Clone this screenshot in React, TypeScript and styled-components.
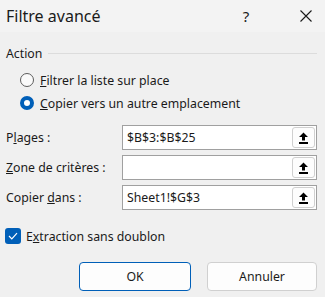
import styled, { createGlobalStyle } from "styled-components";

const GlobalStyle = createGlobalStyle`
  body {
    margin: 0;
    background: #f0f0f0;
    font-family: "Noto Sans", "Open Sans", sans-serif;
    color: #1a1a1a;
  }
`;

const fields = [
    { label: "Plages :", key: "l", index: 1, value: "$B$3:$B$25" },
    { label: "Zone de critères :", key: "Z", index: 0, value: "" },
    { label: "Copier dans :", key: "d", index: 7, value: "Sheet1!$G$3" },
];

function Mnemonic({ text, index }: { text: string; index: number }) {
    return (
        <>
            {text.slice(0, index)}
            <u>{text[index]}</u>
            {text.slice(index + 1)}
        </>
    );
}

function UploadIcon() {
    return (
        <svg width="11" height="12" viewBox="0 0 11 12">
            <path d="M5.5 0.5 L10 5 L7 5 L7 8.5 L4 8.5 L4 5 L1 5 Z" fill="#000" />
            <rect x="1" y="10" width="9" height="2" fill="#000" />
        </svg>
    );
}

export default function App() {
    return (
        <Dialog>
            <GlobalStyle />
            <TitleBar>
                <Title>Filtre avancé</Title>
                <HelpButton>?</HelpButton>
                <CloseButton>
                    <svg width="12" height="12" viewBox="0 0 12 12">
                        <path d="M0.5 0.5 L11.5 11.5 M11.5 0.5 L0.5 11.5" stroke="#1a1a1a" strokeWidth="1.1" />
                    </svg>
                </CloseButton>
            </TitleBar>
            <Body>
                <GroupHeader>
                    <span>Action</span>
                    <Rule />
                </GroupHeader>
                <RadioList>
                    <RadioRow>
                        <Radio />
                        <span><Mnemonic text="Filtrer la liste sur place" index={0} /></span>
                    </RadioRow>
                    <RadioRow>
                        <Radio checked />
                        <span><Mnemonic text="Copier vers un autre emplacement" index={0} /></span>
                    </RadioRow>
                </RadioList>
                <Fields>
                    {fields.map((f) => (
                        <FieldRow key={f.label}>
                            <FieldLabel><Mnemonic text={f.label} index={f.index} /></FieldLabel>
                            <InputBox>
                                <InputText>{f.value}</InputText>
                                <PickButton><UploadIcon /></PickButton>
                            </InputBox>
                        </FieldRow>
                    ))}
                </Fields>
                <CheckRow>
                    <CheckBox>
                        <svg width="10" height="8" viewBox="0 0 10 8">
                            <path d="M1 4 L3.8 6.8 L9 1.2" fill="none" stroke="#fff" strokeWidth="1.2" />
                        </svg>
                    </CheckBox>
                    <span><Mnemonic text="Extraction sans doublon" index={1} /></span>
                </CheckRow>
                <Buttons>
                    <DialogButton primary>OK</DialogButton>
                    <DialogButton>Annuler</DialogButton>
                </Buttons>
            </Body>
        </Dialog>
    );
}

const Dialog = styled.div`
    width: 325px;
    height: 297px;
    background: #f0f0f0;
    display: flex;
    flex-direction: column;
    font-size: 12.3px;
`;

const TitleBar = styled.div`
    height: 32px;
    background: #f3f3f3;
    display: flex;
    align-items: center;
    padding-left: 6px;
`;

const Title = styled.div`
    flex: 1;
    font-size: 16px;
    color: #1a1a1a;
`;

const HelpButton = styled.div`
    width: 30px;
    font-size: 15px;
    margin-right: 22px;
    text-align: center;
`;

const CloseButton = styled.div`
    width: 46px;
    display: flex;
    justify-content: center;
    margin-right: -4px;
`;

const Body = styled.div`
    display: flex;
    flex-direction: column;
    padding: 0 8px 0 6px;
`;

const GroupHeader = styled.div`
    margin-top: 13px;
    height: 16px;
    display: flex;
    align-items: center;
    gap: 6px;
`;

const Rule = styled.div`
    flex: 1;
    height: 1px;
    background: #dcdcdc;
`;

const RadioList = styled.div`
    margin-top: 9px;
    display: flex;
    flex-direction: column;
    gap: 3px;
    padding-left: 14px;
`;

const RadioRow = styled.div`
    height: 20px;
    display: flex;
    align-items: center;
    gap: 6px;
`;

const Radio = styled.div<{ checked?: boolean }>`
    width: 14px;
    height: 14px;
    border-radius: 50%;
    box-sizing: border-box;
    background: ${(p) => (p.checked ? "#fff" : "#fafafa")};
    border: ${(p) => (p.checked ? "4px solid #005fb8" : "1px solid #5c5c5c")};
`;

const Fields = styled.div`
    margin-top: 12px;
    display: flex;
    flex-direction: column;
    gap: 5px;
`;

const FieldRow = styled.div`
    display: flex;
    align-items: center;
    height: 25px;
`;

const FieldLabel = styled.div`
    width: 116px;
`;

const InputBox = styled.div`
    flex: 1;
    height: 25px;
    box-sizing: border-box;
    border: 1px solid #a0a0a0;
    background: #fff;
    display: flex;
    align-items: center;
    padding: 1px;
`;

const InputText = styled.div`
    flex: 1;
    padding-left: 3px;
`;

const PickButton = styled.div`
    width: 23px;
    height: 21px;
    box-sizing: border-box;
    border: 1px solid #d0d0d0;
    border-radius: 3px;
    background: #fdfdfd;
    display: flex;
    align-items: center;
    justify-content: center;
`;

const CheckRow = styled.div`
    margin-top: 18px;
    height: 16px;
    display: flex;
    align-items: center;
    gap: 5px;
    margin-left: -1px;
`;

const CheckBox = styled.div`
    width: 16px;
    height: 16px;
    border-radius: 3px;
    background: #005fb8;
    display: flex;
    align-items: center;
    justify-content: center;
`;

const Buttons = styled.div`
    margin-top: 18px;
    display: flex;
    justify-content: flex-end;
    gap: 16px;
`;

const DialogButton = styled.div<{ primary?: boolean }>`
    height: 29px;
    box-sizing: border-box;
    width: ${(p) => (p.primary ? "112px" : "110px")};
    border-radius: 4px;
    background: #fdfdfd;
    border: ${(p) => (p.primary ? "1px solid #005fb8" : "1px solid #d0d0d0")};
    display: flex;
    align-items: center;
    justify-content: center;
`;
